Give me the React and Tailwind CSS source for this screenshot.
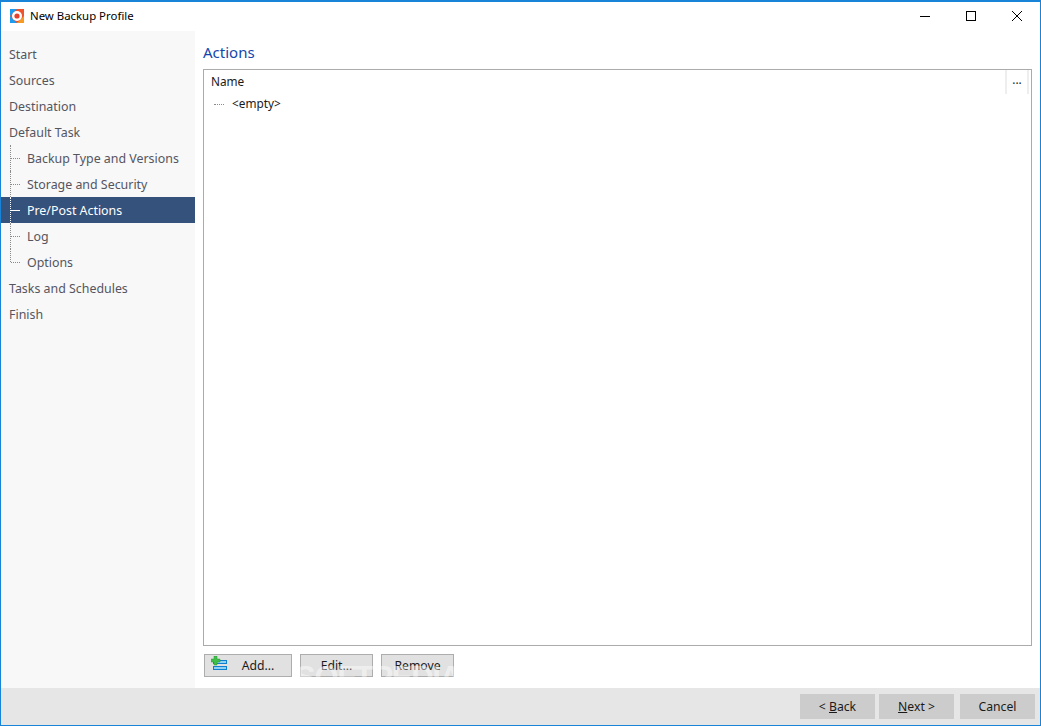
const topSteps = ["Start", "Sources", "Destination", "Default Task"];
const subSteps = ["Backup Type and Versions", "Storage and Security", "Pre/Post Actions", "Log", "Options"];
const endSteps = ["Tasks and Schedules", "Finish"];

function AppLogo() {
  return (
    <svg width="14" height="14" viewBox="0 0 14 14">
      <rect width="14" height="14" fill="#f0522b" />
      <path d="M0 0h7L0 7zM0 14V7l7 7z" fill="#1c9bf0" />
      <path d="M14 14H7l7-7z" fill="#f59a23" />
      <circle cx="7" cy="7" r="5" fill="#fff" />
      <circle cx="7" cy="7" r="2.6" fill="#e8402a" />
    </svg>
  );
}

function AddIcon() {
  return (
    <svg width="16" height="16" viewBox="0 0 16 16">
      <rect x="2.5" y="4.5" width="13" height="3" fill="#8fd0f5" stroke="#0f7fd0" />
      <rect x="2.5" y="10.5" width="13" height="3" fill="#8fd0f5" stroke="#0f7fd0" />
      <path d="M3 0h3v3h3v3H6v3H3V6H0V3h3z" fill="#3fbf4a" stroke="#2a9a36" strokeWidth="0.5" />
    </svg>
  );
}

function WindowControls() {
  return (
    <div className="flex items-center -mt-px">
      <div className="w-[46px] h-[30px] flex items-center justify-center">
        <div className="w-[10px] h-px bg-black" />
      </div>
      <div className="w-[46px] h-[30px] flex items-center justify-center">
        <div className="w-[10px] h-[10px] border border-black" />
      </div>
      <div className="w-[46px] h-[30px] flex items-center justify-center">
        <svg width="10" height="10" viewBox="0 0 10 10">
          <path d="M0 0l10 10M10 0L0 10" stroke="#000" strokeWidth="1" />
        </svg>
      </div>
    </div>
  );
}

function SubStep({ label, isActive, isLast }) {
  return (
    <div
      className={`relative h-[26px] pl-[26px] pt-[2px] flex items-center ${
        isActive ? "bg-[#34527c] text-white" : "text-[#55555f]"
      }`}
    >
      {/* Tree connector */}
      <div
        className={`absolute left-[9px] top-0 border-l border-dotted ${
          isActive ? "border-white" : "border-[#8a8a8a]"
        } ${isLast ? "h-[13px]" : "h-[26px]"}`}
      />
      <div
        className={`absolute left-[10px] top-[13px] w-[9px] border-t ${
          isActive ? "border-solid border-white" : "border-dotted border-[#8a8a8a]"
        }`}
      />
      {label}
    </div>
  );
}

function Sidebar() {
  return (
    <div className="w-[194px] bg-[#f8f8f8] pt-[10px] text-[12.4px] text-[#55555f]">
      {topSteps.map((step) => (
        <div key={step} className="h-[26px] pl-2 pt-[2px] flex items-center">
          {step}
        </div>
      ))}
      {subSteps.map((step, i) => (
        <SubStep
          key={step}
          label={step}
          isActive={step === "Pre/Post Actions"}
          isLast={i === subSteps.length - 1}
        />
      ))}
      {endSteps.map((step) => (
        <div key={step} className="h-[26px] pl-2 pt-[2px] flex items-center">
          {step}
        </div>
      ))}
    </div>
  );
}

function ActionButton({ width, icon, children }) {
  return (
    <button
      className={`${width} relative h-[23px] border border-[#adadad] bg-[#e1e1e1] pt-px text-[12.2px] text-[#1a1a1a] flex items-center justify-center`}
    >
      {icon && <span className="absolute left-[6px] top-[1px]">{icon}</span>}
      {children}
    </button>
  );
}

function FooterButton({ children }) {
  return (
    <button className="w-[75px] h-[25px] bg-[#cccccc] pt-[2px] text-[12.2px] text-[#1a1a1a] flex items-center justify-center">
      {children}
    </button>
  );
}

export default function App() {
  return (
    <div
      className="w-[1041px] h-[726px] flex flex-col bg-white border border-t-2 border-[#1883d7] overflow-hidden relative"
      style={{ fontFamily: '"Noto Sans", sans-serif' }}
    >
      {/* Title bar */}
      <div className="h-[29px] flex items-center justify-between shrink-0">
        <div className="flex items-center pl-[9px] gap-[6px] text-[11.4px] text-black -mt-px">
          <AppLogo />
          <span>New Backup Profile</span>
        </div>
        <WindowControls />
      </div>

      <div className="flex-1 flex min-h-0">
        <Sidebar />

        {/* Main panel */}
        <div className="flex-1 flex flex-col pl-2 pr-2 min-w-0">
          <div className="h-[38px] pt-[10px] text-[15px] leading-[23px] text-[#1247ad]">Actions</div>

          <div className="h-[577px] border border-[#ababab] text-[11.8px] text-[#1a1a1a]">
            <div className="h-[24px] flex items-center justify-between pl-[7px]">
              <span>Name</span>
              <div className="w-[24px] h-[24px] mr-[2px] border-x-2 border-[#eeeeee] flex items-center justify-center leading-none pb-1">
                ...
              </div>
            </div>
            <div className="h-[20px] flex items-center pl-[10px]">
              <div className="w-[10px] border-t border-dotted border-[#8a8a8a] mr-[8px]" />
              &lt;empty&gt;
            </div>
          </div>

          <div className="flex gap-2 mt-2 ml-px">
            <ActionButton width="w-[88px]" icon={<AddIcon />}>
              <span className="pl-[20px]">Add...</span>
            </ActionButton>
            <ActionButton width="w-[73px]">Edit...</ActionButton>
            <ActionButton width="w-[73px]">Remove</ActionButton>
          </div>
        </div>
      </div>

      {/* Footer */}
      <div className="h-[37px] shrink-0 bg-[#e6e6e6] flex items-start pt-[6px] pr-[5px] justify-end">
        <div className="flex gap-1 mr-[6px]">
          <FooterButton>
            &lt;&nbsp;<span className="underline">B</span>ack
          </FooterButton>
          <FooterButton>
            <span className="underline">N</span>ext &gt;
          </FooterButton>
        </div>
        <FooterButton>Cancel</FooterButton>
      </div>

      {/* Watermark */}
      <div
        className="absolute left-[294px] top-[659px] text-[31px] leading-[34px] font-bold tracking-[-1.3px] text-white/45 pointer-events-none"
        style={{ fontFamily: '"Liberation Sans", sans-serif' }}
      >
        SOFTPEDIA
      </div>
    </div>
  );
}
